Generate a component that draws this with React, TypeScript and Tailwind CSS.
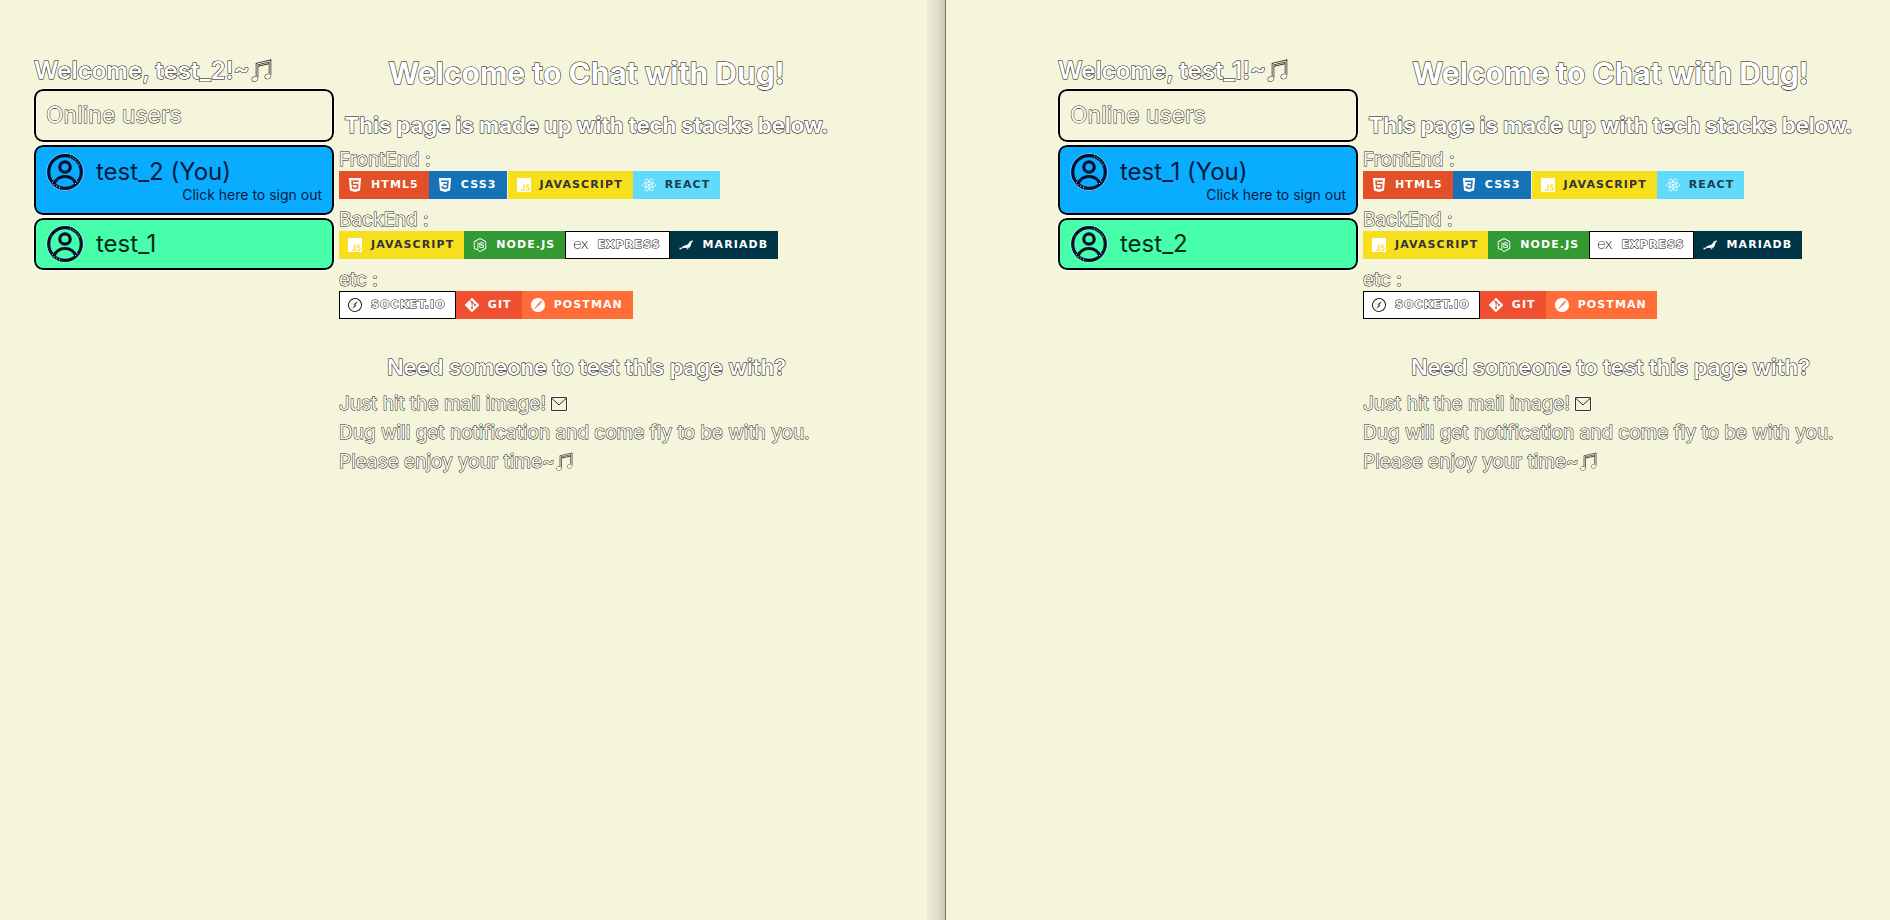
import type { ReactNode } from "react";
import {
  SiExpress,
  SiGit,
  SiHtml5,
  SiJavascript,
  SiMariadb,
  SiNodedotjs,
  SiPostman,
  SiReact,
  SiSocketdotio,
} from "react-icons/si";

const outlined = "text-[#fafaec] [paint-order:stroke_fill] [-webkit-text-stroke:1px_#1c1c18]";
const outlinedBold = "text-white [paint-order:stroke_fill] [-webkit-text-stroke:1px_#000000]";

function CssLogo() {
  return (
    <svg viewBox="0 0 24 24" className="size-3.5" fill="currentColor" aria-hidden="true">
      <path d="M1.5 0h21l-1.91 21.563L11.977 24l-8.565-2.438L1.5 0zm17.09 4.413L5.41 4.41l.213 2.622 10.125.002-.255 2.716h-6.64l.24 2.573h6.182l-.366 3.523-2.91.804-2.956-.81-.188-2.11h-2.61l.29 3.855L12 19.288l5.373-1.53L18.59 4.414z" />
    </svg>
  );
}

function Avatar() {
  return (
    <svg viewBox="0 0 38 38" className="size-[38px] shrink-0" fill="none" aria-hidden="true">
      <circle cx="19" cy="19" r="18.300" stroke="#ffffff" strokeOpacity="0.4" strokeWidth="1" />
      <g stroke="#04102e" strokeWidth="3.2">
        <circle cx="19" cy="19" r="16.300" />
        <circle cx="19" cy="14" r="5.200" />
        <path d="M8 31c2-5 6-7.500 11-7.500S28 26 30 31" />
      </g>
      <g stroke="#ffffff" strokeWidth="1" strokeDasharray="1 2">
        <path d="M24 3.500a16.500 16.500 0 0 1 9.500 9" />
        <path d="M6 29l3 3.500 6 2.500" />
        <path d="M29 31l4-4.500" />
      </g>
    </svg>
  );
}

function Notes({ className }: { className: string }) {
  return (
    <svg viewBox="0 0 22 24" className={`inline-block ${className}`} fill="none" aria-hidden="true">
      <g stroke="#2b2b26">
        <path d="M7 19V5l13-3v14.500" strokeWidth="2.600" />
        <ellipse cx="4.800" cy="20" rx="2.800" ry="2.200" transform="rotate(-18 4.800 20)" fill="#fafaec" />
        <ellipse cx="17.800" cy="17.500" rx="2.800" ry="2.200" transform="rotate(-18 17.800 17.500)" fill="#fafaec" />
        <path d="M7 7.500l13-3" strokeWidth="1" />
      </g>
      <path d="M7 19.500V5l13-3v15" stroke="#fafaec" strokeWidth="1" />
    </svg>
  );
}

function Envelope() {
  return (
    <svg viewBox="0 0 18 16" className="h-4 w-[18px]" fill="none" stroke="#33332e" aria-hidden="true">
      <rect x="0.5" y="0.5" width="17" height="15" stroke="#ffffff" />
      <path d="M1.500 1.500h15v13h-15zM1.500 2l7.500 7 7.500-7" />
    </svg>
  );
}

type BadgeProps = { tone: string; icon: ReactNode; children: string };

function Badge({ tone, icon, children }: BadgeProps) {
  return (
    <li className={`flex h-7 items-center gap-[9px] pr-2.5 pl-[9px] ${tone}`}>
      {icon}
      <span className="font-['DejaVu_Sans'] text-[11px] leading-4 font-bold tracking-widest">{children}</span>
    </li>
  );
}

const js = "bg-[#f7df1e] text-[#323330] [&>svg]:text-white";
const white =
  "bg-white inset-ring inset-ring-black text-white [&>span]:[paint-order:stroke_fill] [&>span]:[-webkit-text-stroke:1px_#000000] [&>svg]:text-[#222222]";

function Stack({ label, children }: { label: string; children: ReactNode }) {
  return (
    <section className="mb-2.5">
      <h3 className={`text-[19px] leading-[22px] ${outlined}`}>{label}</h3>
      <ul className="flex">{children}</ul>
    </section>
  );
}

function Sidebar({ me, other }: { me: string; other: string }) {
  return (
    <aside className="w-[300px] shrink-0">
      <h2 className={`flex items-center text-2xl leading-9 font-semibold whitespace-nowrap ${outlinedBold}`}>
        Welcome, {me}!~
        <Notes className="h-6 w-[22px]" />
      </h2>
      <div className="flex flex-col gap-[3px]">
        <div className={`rounded-[9px] border-2 border-black px-2.5 py-2 text-[23px] leading-[33px] outline outline-white/70 ${outlined}`}>
          Online users
        </div>
        <button
          type="button"
          className="block rounded-[9px] border-2 border-black bg-[#0aacff] px-2.5 pt-1.5 pb-2.5 text-left outline outline-white/70"
        >
          <span className="flex items-center gap-3">
            <Avatar />
            <span className="text-2xl leading-8 text-[#001a40]">{me} (You)</span>
          </span>
          <span className="-mt-1 block text-right text-[14px] leading-4 text-[#001a40]">Click here to sign out</span>
        </button>
        <button
          type="button"
          className="flex items-center gap-3 rounded-[9px] border-2 border-black bg-[#47ffab] px-2.5 py-[5px] text-left outline outline-white/70"
        >
          <Avatar />
          <span className="text-2xl leading-8 text-[#062b1a]">{other}</span>
        </button>
      </div>
    </aside>
  );
}

function Intro() {
  return (
    <main className="w-[495px] shrink-0">
      <h1 className={`text-center text-[30px] leading-10 font-bold whitespace-nowrap ${outlinedBold}`}>
        Welcome to Chat with Dug!
      </h1>
      <h2 className={`mt-4 mb-2 text-center text-[22px] leading-8 font-bold whitespace-nowrap ${outlinedBold}`}>
        This page is made up with tech stacks below.
      </h2>
      <Stack label="FrontEnd :">
        <Badge tone="bg-[#e34f26] text-white" icon={<SiHtml5 className="size-3.5" />}>HTML5</Badge>
        <Badge tone="bg-[#1572b6] text-white mr-px" icon={<CssLogo />}>CSS3</Badge>
        <Badge tone={js} icon={<SiJavascript className="size-3.5" />}>JAVASCRIPT</Badge>
        <Badge tone="bg-[#61dafb] text-[#17404d] [&>svg]:text-white" icon={<SiReact className="size-3.5" />}>REACT</Badge>
      </Stack>
      <Stack label="BackEnd :">
        <Badge tone={js} icon={<SiJavascript className="size-3.5" />}>JAVASCRIPT</Badge>
        <Badge tone="bg-[#339933] text-white" icon={<SiNodedotjs className="size-3.5" />}>NODE.JS</Badge>
        <Badge tone={white} icon={<SiExpress className="size-3.5" />}>EXPRESS</Badge>
        <Badge tone="bg-[#003545] text-white" icon={<SiMariadb className="size-3.5" />}>MARIADB</Badge>
      </Stack>
      <Stack label="etc :">
        <Badge tone={white} icon={<SiSocketdotio className="size-3.5" />}>SOCKET.IO</Badge>
        <Badge tone="bg-[#f05032] text-white" icon={<SiGit className="size-3.5" />}>GIT</Badge>
        <Badge tone="bg-[#ff6c37] text-white" icon={<SiPostman className="size-3.5" />}>POSTMAN</Badge>
      </Stack>
      <h2 className={`mt-7 mb-0.5 text-center text-[22px] leading-10 font-semibold whitespace-nowrap ${outlinedBold}`}>
        Need someone to test this page with?
      </h2>
      <div className={`text-[19px] leading-[29px] whitespace-nowrap ${outlined}`}>
        <p className="flex items-center gap-1">
          Just hit the mail image!
          <a href="mailto:dug@example.com" aria-label="Send mail">
            <Envelope />
          </a>
        </p>
        <p>Dug will get notification and come fly to be with you.</p>
        <p className="flex items-center">
          Please enjoy your time~
          <Notes className="h-5 w-[18px]" />
        </p>
      </div>
    </main>
  );
}

function ChatWindow({ me, other, className }: { me: string; other: string; className: string }) {
  return (
    <div className={`flex min-w-0 gap-[5px] pt-[53px] ${className}`}>
      <Sidebar me={me} other={other} />
      <Intro />
    </div>
  );
}

export default function App() {
  return (
    <div className="grid min-h-screen grid-cols-2 overflow-hidden bg-[#f5f5dc] font-[Inter,'Liberation_Sans',sans-serif]">
      <ChatWindow me="test_2" other="test_1" className="pl-[34px] bg-[linear-gradient(to_left,#c9c9b5,#e0e0ca_8px,#ebebd5_18px,#f5f5dc_18px)]" />
      <ChatWindow me="test_1" other="test_2" className="justify-end border-l border-[#77776a] pr-8" />
    </div>
  );
}
